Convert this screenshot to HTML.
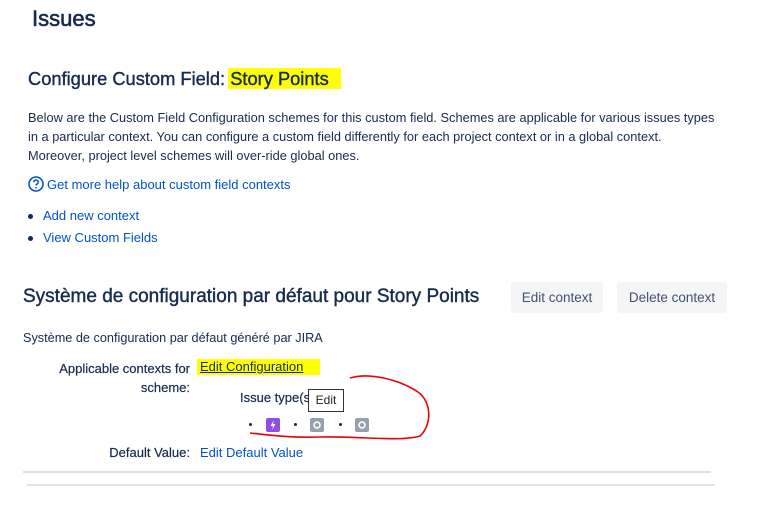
<!DOCTYPE html>
<html><head><style>
body{margin:0;width:772px;height:509px;background:#fff;font-family:"Liberation Sans",sans-serif;color:#172b4d;position:relative;overflow:hidden}
.a{position:absolute;white-space:nowrap}
a,.l{color:#0052cc;text-decoration:none}
.btn{position:absolute;background:#f4f5f7;border-radius:3px;font-size:13.5px;color:#42526e;text-align:center;line-height:31px;height:31px}
.dot{position:absolute;width:3px;height:3px;background:#172b4d;border-radius:50%}
.ic{position:absolute;width:14px;height:14px;border-radius:2px}
</style></head><body>
<div class="a" style="left:32px;top:6px;font-size:22px;-webkit-text-stroke:0.6px #172b4d">Issues</div>
<div class="a" style="left:28px;top:68px;font-size:18.3px;-webkit-text-stroke:0.4px #172b4d">Configure Custom Field: <span style="background:#ffff00;padding:0 12px 0 2px;margin-left:-2px">Story Points</span></div>
<div class="a" style="left:28px;top:108px;font-size:12.8px;line-height:19px;color:#172b4d">Below are the Custom Field Configuration schemes for this custom field. Schemes are applicable for various issues types<br>in a particular context. You can configure a custom field differently for each project context or in a global context.<br>Moreover, project level schemes will over-ride global ones.</div>
<svg class="a" style="left:28px;top:176px" width="16" height="16" viewBox="0 0 16 16"><circle cx="8" cy="8" r="7" fill="none" stroke="#0052cc" stroke-width="1.6"/><path d="M5.8 6.2a2.2 2.2 0 1 1 3 2c-.6.3-.8.7-.8 1.3" fill="none" stroke="#0052cc" stroke-width="1.5"/><circle cx="8" cy="11.8" r=".9" fill="#0052cc"/></svg>
<div class="a l" style="left:47px;top:177px;font-size:13px">Get more help about custom field contexts</div>
<div class="dot" style="left:28px;top:214px;width:5px;height:5px"></div>
<div class="a l" style="left:43px;top:208px;font-size:13px">Add new context</div>
<div class="dot" style="left:28px;top:236px;width:5px;height:5px"></div>
<div class="a l" style="left:43px;top:230px;font-size:13px">View Custom Fields</div>
<div class="a" style="left:23px;top:286px;font-size:19px;-webkit-text-stroke:0.4px #172b4d">Système de configuration par défaut pour Story Points</div>
<div class="btn" style="left:511px;top:282px;width:92px">Edit context</div>
<div class="btn" style="left:617px;top:282px;width:110px">Delete context</div>
<div class="a" style="left:23px;top:331px;font-size:12.7px">Système de configuration par défaut généré par JIRA</div>
<div class="a" style="left:0;width:190px;text-align:right;top:359px;font-size:13px;line-height:19px;white-space:normal;color:#172b4d;-webkit-text-stroke:0.2px #172b4d">Applicable contexts for<br>scheme:</div>
<div class="a" style="left:197px;top:359px;width:123px;height:16px;background:#ffff00"></div>
<div class="a" style="left:200px;top:359px;font-size:13px;color:#172b4d;text-decoration:underline">Edit Configuration</div>
<div class="a" style="left:240px;top:390px;font-size:13px;color:#172b4d;-webkit-text-stroke:0.2px #172b4d">Issue type(s</div>
<div class="a" style="left:308px;top:389px;width:34px;height:21px;border:1px solid #333;background:#fff;font-size:12px;line-height:21px;text-align:center;color:#222">Edit</div>
<div class="dot" style="left:249px;top:423px"></div>
<div class="ic" style="left:266px;top:418px;background:#904ee2"><svg width="14" height="14"><path d="M8 2 4.5 8H7l-1 4 3.5-6H7z" fill="#fff"/></svg></div>
<div class="dot" style="left:294px;top:423px"></div>
<div class="ic" style="left:310px;top:418px;background:#97a0af"><svg width="14" height="14"><circle cx="7" cy="7" r="3" fill="none" stroke="#fff" stroke-width="1.6"/></svg></div>
<div class="dot" style="left:339px;top:423px"></div>
<div class="ic" style="left:355px;top:418px;background:#97a0af"><svg width="14" height="14"><circle cx="7" cy="7" r="3" fill="none" stroke="#fff" stroke-width="1.6"/></svg></div>
<svg class="a" style="left:0;top:0" width="772" height="509"><path d="M350 378 C370 372 400 380 418 392 C432 402 432 425 420 436 C400 442 360 436 320 437 C290 438 270 435 250 433" fill="none" stroke="#e00" stroke-width="1.6"/></svg>
<div class="a" style="left:0;width:190px;text-align:right;top:445px;font-size:13px;color:#172b4d;-webkit-text-stroke:0.2px #172b4d">Default Value:</div>
<div class="a l" style="left:200px;top:445px;font-size:13px">Edit Default Value</div>
<div class="a" style="left:23px;top:471px;width:688px;height:2px;background:#dfe1e6"></div>
<div class="a" style="left:27px;top:484px;width:688px;height:2px;background:#dfe1e6"></div>
</body></html>
